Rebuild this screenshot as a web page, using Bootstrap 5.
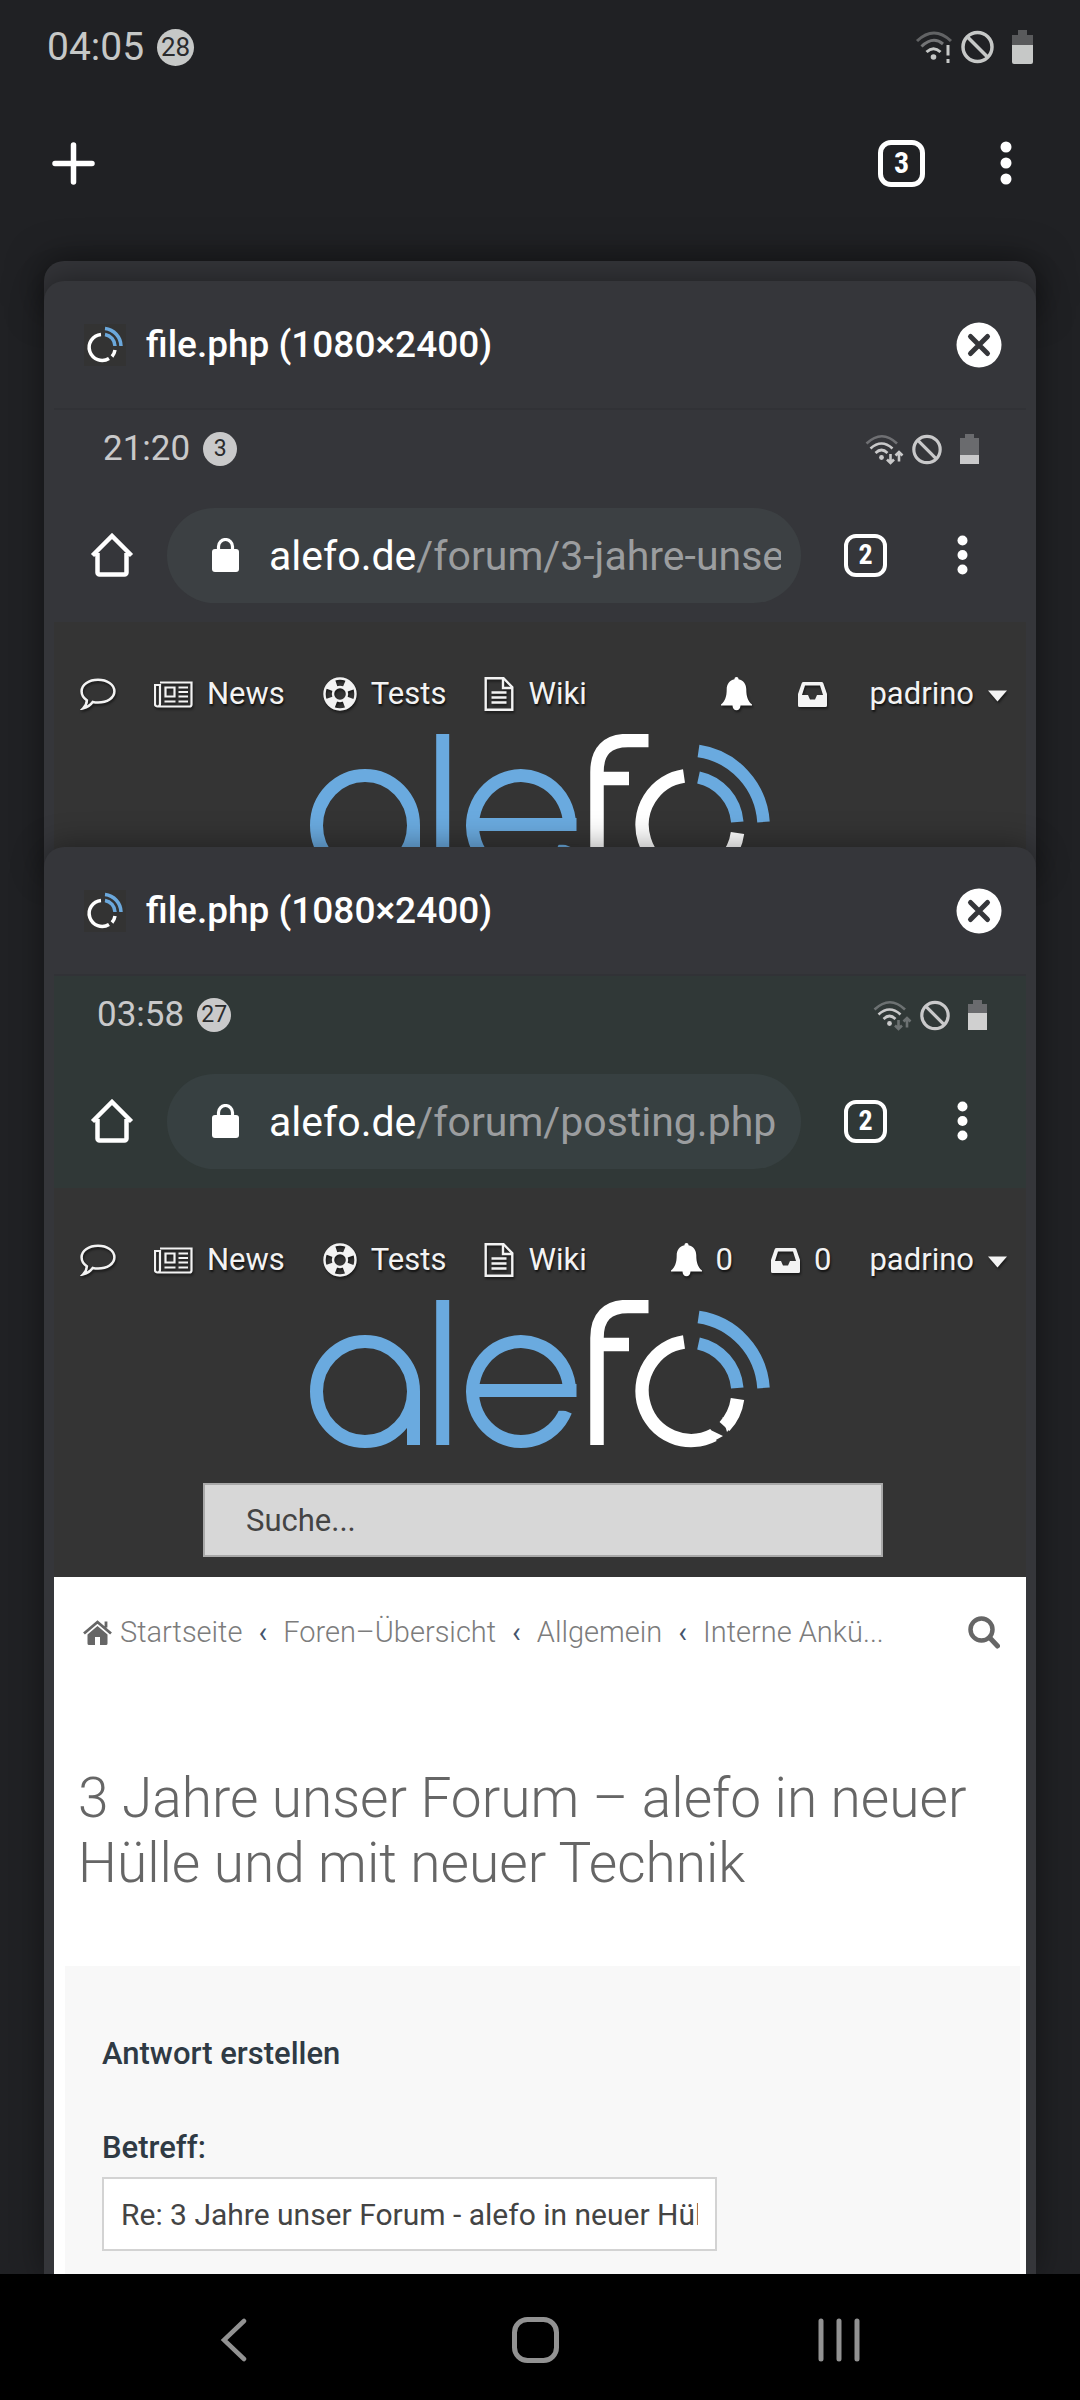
<!DOCTYPE html>
<html lang="de">
<head>
<meta charset="utf-8">
<meta name="viewport" content="width=device-width, initial-scale=1">
<title>Tabs</title>
<link href="https://cdn.jsdelivr.net/npm/bootstrap@5.3.0/dist/css/bootstrap.min.css" rel="stylesheet">
<style>
body{background:#202124;color:#fff;font-family:Roboto,"Liberation Sans",sans-serif;font-size:31px;line-height:40px}
svg{display:block;flex:none}
button{color:inherit;background:none;border:0;padding:0;font:inherit;flex:none}
.sys-bar{height:94px;padding:0 47px;font-size:39px;color:#c6c8c7}
.count-dot{width:37px;height:37px;border-radius:50%;background:#c6c8c7;color:#2a2b2d;font-size:26px;margin-left:13px}
.battery{margin-left:18px}
.tools-bar{height:138px;padding:0 68px 0 52px}
.tab-count{width:47px;height:47px;border:5px solid #fff;border-radius:13px;font-weight:700;font-size:30px;line-height:36px;font-family:"Roboto Condensed",Roboto,sans-serif}
.menu-dots{margin-left:75px}
.deck{padding:29px 44px 0}
.tab-peek{height:46px;margin-bottom:-26px;border-radius:20px 20px 0 0;background:#333438;box-shadow:0 0 36px rgba(0,0,0,.5)}
.tab-card{position:relative;background:#35363a;border-radius:20px 20px 0 0;box-shadow:0 0 32px rgba(0,0,0,.42)}
.tab-under{height:592px;margin-bottom:-26px;overflow:hidden}
.tab-head{height:127px;padding:0 34px 0 40px}
.tab-title{font-size:37px;line-height:48px;font-weight:500;margin-left:20px}
.shot{margin:0 10px;border-top:2px solid #313236}
.shot-sys{height:78px;padding:0 47px 0 49px;font-size:35px;color:#c9c9ca}
.shot-sys .count-dot{width:34px;height:34px;font-size:23px;background:#c9c9ca}
.shot-url{height:134px;padding:0 58px 0 36px}
.shot-url .tab-count{width:43px;height:43px;border-width:4px;font-size:28px;line-height:34px;border-radius:12px}
.shot-url .menu-dots{margin-left:70px}
.omni{height:95px;border-radius:48px;background:#3c4043;padding:0 20px 0 45px;margin:0 43px 0 33px;font-size:41px;color:#9b9d9f;flex:1 1 0;min-width:0}
.omni-text{overflow:hidden;white-space:nowrap;margin-left:30px;padding-top:2px;text-align:left;line-height:56px}
.green{background:#303837}
.green .shot-sys{padding:0 39px 0 43px}
.green .omni{background:#374041}
.forum-head{background:#343434;padding:30px 0 20px}
.forum-nav{height:84px;margin-bottom:-2px;padding:0 19px 0 26px;text-shadow:1px 2px 2px #111}
.forum-nav a{display:flex;align-items:center;gap:14px;color:#f3f3f3;text-decoration:none}
.forum-nav svg{filter:drop-shadow(1px 2px 1px #1a1a1a)}
.nav-group{display:flex;gap:38px}
.find-box{display:block;width:70%;height:74px;margin:34px auto 0 149px;border:2px solid #a9a9a9;background:#d7d7d7;color:#444;padding:0 41px}
.find-box::placeholder{color:#444;opacity:1}
.crumbs{height:110px;padding:0 26px 0 29px;font-weight:300;font-size:29px}
.crumbs a{color:#7c7c7c;text-decoration:none}
.crumbs b{font-weight:400;color:#44546c}
.topic{font-size:55px;line-height:65px;font-weight:300;color:#666;margin:0;padding:79px 24px 70px}
.reply{background:#f8f8f8;margin:0 6px 0 11px;padding:68px 37px 22px;color:#2f3a44}
.reply h2,.reply label{font-size:31px;line-height:40px;font-weight:500;margin:0}
.reply label{display:block;margin:54px 0 9px}
.reply input{display:block;width:615px;max-width:100%;height:74px;border:2px solid #d3d3d3;background:#fff;color:#444;padding:0 17px;font-size:30px}
.keys{height:126px;background:#000;padding:6px 220px 0;position:relative}
</style>
<script src="https://cdn.jsdelivr.net/npm/bootstrap@5.3.0/dist/js/bootstrap.bundle.min.js"></script>
</head>
<body class="d-flex flex-column min-vh-100">
<svg class="d-none" aria-hidden="true">
 <symbol id="fav" viewBox="0 0 42 42"><path fill="#333" d="M0 0h42v42H0z"/><g fill="none" stroke="#fff" stroke-width="3.500"><path d="M17 10.500A13 13 0 1 0 25 34.500"/><path d="M28 32.500A13 13 0 0 0 31 26"/></g><g fill="none" stroke="#6ba8dc" stroke-width="3.500"><path d="M21 10.500A12 12 0 0 1 31 22"/><path d="M21 4.500A18 18 0 0 1 37 22"/></g></symbol>
 <symbol id="close" viewBox="0 0 46 46"><circle cx="23" cy="23" r="22.500" fill="#fff"/><path d="M14.500 14.500l17 17M31.500 14.500l-17 17" stroke="#35363a" stroke-width="5" stroke-linecap="round"/></symbol>
 <symbol id="dots" viewBox="0 0 12 44"><g fill="#fff"><circle cx="6" cy="6" r="5.500"/><circle cx="6" cy="22" r="5.500"/><circle cx="6" cy="38" r="5.500"/></g></symbol>
 <symbol id="ban" viewBox="0 0 33 34"><g fill="none" stroke="currentColor" stroke-width="3.500"><circle cx="16.500" cy="17" r="14.500"/><path d="M6.500 7l20 20"/></g></symbol>
 <symbol id="home" viewBox="0 0 44 44"><path d="M2.500 22.500L22 3l19.500 19.500M7.500 20v19.500a2 2 0 0 0 2 2h25a2 2 0 0 0 2-2V20" fill="none" stroke="#fff" stroke-width="4.500"/></symbol>
 <symbol id="lock" viewBox="0 0 27 34"><rect y="11" width="27" height="23" rx="3" fill="#fff"/><path d="M6.500 13V8.500a7 7 0 0 1 14 0V13" fill="none" stroke="#fff" stroke-width="3.200"/></symbol>
 <symbol id="chat" viewBox="0 0 34 30"><path d="M17 1.500c8.500 0 15.500 4.500 15.500 11S25.500 23 17 23c-2 0-3.500-.2-5-.5-2.500 3.500-5.500 5-9 6 2-2 3.500-4.500 3.500-7.500-3-2-5-5-5-8.500C1.500 6 8.500 1.500 17 1.500z" fill="none" stroke="#f3f3f3" stroke-width="2.400"/></symbol>
 <symbol id="paper" viewBox="0 0 39 27"><g fill="none" stroke="#f3f3f3" stroke-width="2.200"><path d="M6 1.500h31.500v22a2 2 0 0 1-2 2h-32A2.500 2.500 0 0 1 1 23V4h5v19a2.500 2.500 0 0 1-2.500 2.500"/><path d="M11.500 6.500h9v9h-9zM24.500 6.500H34M24.500 11H34M24.500 15.500H34M10.500 20.500h11M24.500 20.500H34"/></g></symbol>
 <symbol id="ring" viewBox="0 0 34 34"><circle cx="17" cy="17" r="15.500" fill="none" stroke="#f3f3f3" stroke-width="2.400"/><circle cx="17" cy="17" r="7" fill="none" stroke="#f3f3f3" stroke-width="2.400"/><circle cx="17" cy="17" r="11.500" fill="none" stroke="#f3f3f3" stroke-width="8.500" stroke-dasharray="9.800 8.264" stroke-dashoffset="-4.100"/></symbol>
 <symbol id="doc" viewBox="0 0 29 34"><g fill="none" stroke="#f3f3f3" stroke-width="2.400"><path d="M1.200 1.200H19l8.800 9V32.800H1.200z"/><path d="M18.500 1.200V11h9.300M7 15.500h15M7 20.500h15M7 25.500h15"/></g></symbol>
 <symbol id="bell" viewBox="0 0 31 34"><path d="M15.500 0c1.300 0 2 .9 2 2.200 5 1 7.800 5 7.800 10 0 7 1.500 12 5.700 15.300V28.500H19.500a4 4.800 0 0 1-8 0H0v-1C4.200 24.200 5.700 19.200 5.700 12.200c0-5 2.800-9 7.800-10 0-1.300.7-2.200 2-2.200z" fill="#fff"/></symbol>
 <symbol id="inbox" viewBox="0 0 29 25"><path fill-rule="evenodd" d="M5.500 0h18a2 2 0 0 1 1.800 1.200L29 12v11.500a1.500 1.500 0 0 1-1.500 1.500h-26A1.500 1.500 0 0 1 0 23.500V12L3.700 1.200A2 2 0 0 1 5.500 0zM7 3.500L4 13h6l2 4.500h5l2-4.500h6L22 3.500z" fill="#f3f3f3"/></symbol>
 <symbol id="caret" viewBox="0 0 19 12"><path d="M0 .5h19L9.500 11.500z" fill="#f3f3f3"/></symbol>
 <symbol id="brand" viewBox="0 0 460 149">
  <g fill="none" stroke="#6aaadf" stroke-width="13"><ellipse cx="55" cy="91.500" rx="48.500" ry="50"/><path d="M103.500 91v54M132.700 0v145"/><path d="M259.500 90.500A48.500 50 0 1 0 255.700 111M162 90.500h104.500"/></g>
  <path d="M239 97.200h30v13.600h-30z" fill="#343434"/>
  <g fill="none" stroke="#fff" stroke-width="13.500"><path d="M287 145V38Q287 6.500 318 6.500h20.500M287 44.500h32"/><path d="M374 42A49 49.500 0 1 0 403.500 135M414.500 126.500A49 50 0 0 0 427.500 99"/></g>
  <path d="M399.500 129.500l13.500 6.500-9 5zM412.500 117l4.500 15 7-8z" fill="#fff"/>
  <g fill="none" stroke="#6aaadf" stroke-width="12.500"><path d="M388.500 43.500A49 50 0 0 1 427.300 88"/><path d="M388.500 17A76 77 0 0 1 453.500 88"/></g>
 </symbol>
</svg>

<header>
 <div class="sys-bar d-flex align-items-center"><span>04:05</span><span class="count-dot d-flex align-items-center justify-content-center">28</span>
  <div class="d-flex align-items-center ms-auto">
   <svg width="38" height="34" viewBox="0 0 38 34"><g fill="none" stroke="#c6c8c7" stroke-width="3"><path d="M2 11Q19-5 36 11" opacity=".4"/><path d="M6.500 16.500Q18 5.500 28 14" opacity=".5"/><path d="M11.500 22q7-6.500 14 0M33 15v10.500M33 29v4"/></g><circle cx="18.500" cy="27" r="2.800" fill="#c6c8c7"/></svg>
   <svg class="ms-2" width="33" height="34"><use href="#ban"/></svg>
   <svg class="battery" width="21" height="34" viewBox="0 0 21 34"><path d="M6 0h9v5h6v10H0V5h6z" fill="#595a5c"/><path d="M0 15h21v17a2 2 0 0 1-2 2H2a2 2 0 0 1-2-2z" fill="#c6c8c7"/></svg>
  </div>
 </div>
 <div class="tools-bar d-flex align-items-center justify-content-between">
  <button aria-label="Neuer Tab"><svg width="43" height="43" viewBox="0 0 43 43"><path d="M21.500 3v37M3 21.500h37" stroke="#fff" stroke-width="5.500" stroke-linecap="round"/></svg></button>
  <div class="d-flex align-items-center"><button class="tab-count">3</button><button class="menu-dots" aria-label="Menü"><svg width="12" height="44"><use href="#dots"/></svg></button></div>
 </div>
</header>

<main class="deck d-flex flex-column flex-grow-1">
 <div class="tab-peek"></div>
 <section class="tab-card tab-under">
  <div class="tab-head d-flex align-items-center"><svg width="42" height="42"><use href="#fav"/></svg><span class="tab-title">file.php (1080×2400)</span><button class="ms-auto" aria-label="Tab schließen"><svg width="46" height="46"><use href="#close"/></svg></button></div>
  <div class="shot">
   <div class="shot-sys d-flex align-items-center"><span>21:20</span><span class="count-dot d-flex align-items-center justify-content-center">3</span>
    <div class="d-flex align-items-center ms-auto">
     <svg width="39" height="31" viewBox="0 0 39 31"><g fill="none" stroke="#c9c9ca" stroke-width="2.600"><path d="M1.500 9.500Q17-5 32 9.500" opacity=".4"/><path d="M5.500 14.500q11-10 22 0M10.500 19q6-6 12 0M25.500 20v8M22 25.500l3.500 3.500 3.500-3.500M34 27.500v-9M30.500 21.500l3.500-3.500 3.500 3.500"/></g><circle cx="16.500" cy="23.500" r="2.400" fill="#c9c9ca"/></svg>
     <svg class="ms-2" width="30" height="31"><use href="#ban"/></svg>
     <svg class="battery" width="19" height="30" viewBox="0 0 19 30"><path d="M5 0h9v4h5v17H0V4h5z" fill="#6a6b6e"/><path d="M0 21h19v9H0z" fill="#c9c9ca"/></svg>
    </div>
   </div>
   <div class="shot-url d-flex align-items-center"><svg width="44" height="44"><use href="#home"/></svg>
    <button class="omni d-flex align-items-center"><svg width="27" height="34"><use href="#lock"/></svg><span class="omni-text"><span class="text-white">alefo.de</span>/forum/3-jahre-unse</span></button>
    <button class="tab-count">2</button><button class="menu-dots" aria-label="Menü"><svg width="11" height="40" viewBox="0 0 12 44"><use href="#dots"/></svg></button>
   </div>
   <div class="forum-head">
    <nav class="forum-nav d-flex align-items-center justify-content-between">
     <div class="nav-group">
      <a href="#" aria-label="Forum"><svg width="36" height="32"><use href="#chat"/></svg></a>
      <a href="#"><svg width="39" height="27"><use href="#paper"/></svg>News</a>
      <a href="#"><svg width="34" height="34"><use href="#ring"/></svg>Tests</a>
      <a href="#"><svg width="30" height="34"><use href="#doc"/></svg>Wiki</a>
     </div>
     <div class="nav-group">
      <a href="#" class="me-2" aria-label="Benachrichtigungen"><svg width="31" height="34"><use href="#bell"/></svg></a>
      <a href="#" class="me-1" aria-label="Nachrichten"><svg width="29" height="25"><use href="#inbox"/></svg></a>
      <a href="#">padrino<svg class="mt-1" width="19" height="12"><use href="#caret"/></svg></a>
     </div>
    </nav>
    <svg class="mx-auto" width="460" height="149" role="img" aria-label="alefo"><use href="#brand"/></svg>
   </div>
  </div>
 </section>

 <section class="tab-card flex-grow-1 d-flex flex-column">
  <div class="tab-head d-flex align-items-center"><svg width="42" height="42"><use href="#fav"/></svg><span class="tab-title">file.php (1080×2400)</span><button class="ms-auto" aria-label="Tab schließen"><svg width="46" height="46"><use href="#close"/></svg></button></div>
  <div class="shot flex-grow-1 d-flex flex-column bg-white">
   <div class="green">
    <div class="shot-sys d-flex align-items-center"><span>03:58</span><span class="count-dot d-flex align-items-center justify-content-center">27</span>
     <div class="d-flex align-items-center ms-auto">
      <svg width="39" height="31" viewBox="0 0 39 31"><g fill="none" stroke="#c9c9ca" stroke-width="2.600"><path d="M1.500 9.500Q17-5 32 9.500" opacity=".4"/><path d="M5.500 14.500q11-10 22 0M10.500 19q6-6 12 0"/><path d="M25.500 20v8M22 25.500l3.500 3.500 3.500-3.500M34 27.500v-9M30.500 21.500l3.500-3.500 3.500 3.500" opacity=".4"/></g><circle cx="16.500" cy="23.500" r="2.400" fill="#c9c9ca"/></svg>
      <svg class="ms-2" width="30" height="31"><use href="#ban"/></svg>
      <svg class="battery" width="19" height="30" viewBox="0 0 19 30"><path d="M5 0h9v4h5v9H0V4h5z" fill="#6a6b6e"/><path d="M0 13h19v17H0z" fill="#d0d0d0"/></svg>
     </div>
    </div>
    <div class="shot-url d-flex align-items-center"><svg width="44" height="44"><use href="#home"/></svg>
     <button class="omni d-flex align-items-center"><svg width="27" height="34"><use href="#lock"/></svg><span class="omni-text"><span class="text-white">alefo.de</span>/forum/posting.php</span></button>
     <button class="tab-count">2</button><button class="menu-dots" aria-label="Menü"><svg width="11" height="40" viewBox="0 0 12 44"><use href="#dots"/></svg></button>
    </div>
   </div>
   <div class="forum-head">
    <nav class="forum-nav d-flex align-items-center justify-content-between">
     <div class="nav-group">
      <a href="#" aria-label="Forum"><svg width="36" height="32"><use href="#chat"/></svg></a>
      <a href="#"><svg width="39" height="27"><use href="#paper"/></svg>News</a>
      <a href="#"><svg width="34" height="34"><use href="#ring"/></svg>Tests</a>
      <a href="#"><svg width="30" height="34"><use href="#doc"/></svg>Wiki</a>
     </div>
     <div class="nav-group">
      <a href="#"><svg width="31" height="34"><use href="#bell"/></svg>0</a>
      <a href="#"><svg width="29" height="25"><use href="#inbox"/></svg>0</a>
      <a href="#">padrino<svg class="mt-1" width="19" height="12"><use href="#caret"/></svg></a>
     </div>
    </nav>
    <svg class="mx-auto" width="460" height="149" role="img" aria-label="alefo"><use href="#brand"/></svg>
    <input class="find-box" type="search" placeholder="Suche..." aria-label="Suche">
   </div>
   <nav class="crumbs d-flex align-items-center">
    <a href="#" class="d-flex align-items-center"><svg width="29" height="25" viewBox="0 0 29 25"><path d="M14.500 6L4.500 14.500V23.500a1.500 1.500 0 0 0 1.500 1.500h6v-8h5v8h6a1.500 1.500 0 0 0 1.500-1.500v-9z" fill="#666"/><path d="M1 13.500L14.500 2 28 13.500M23 1.500v6" fill="none" stroke="#666" stroke-width="2.800"/></svg><span class="ms-2">Startseite</span></a>
    <b class="mx-3">‹</b><a href="#">Foren–Übersicht</a><b class="mx-3">‹</b><a href="#">Allgemein</a><b class="mx-3">‹</b><a href="#">Interne Ankü...</a>
    <button class="ms-auto" aria-label="Suchen"><svg width="32" height="33" viewBox="0 0 32 33"><g fill="none" stroke="#666" stroke-width="4.500"><circle cx="13.500" cy="13.500" r="11"/><path d="M21.500 21.500l8 8.500" stroke-linecap="round" stroke-width="5"/></g></svg></button>
   </nav>
   <h1 class="topic">3 Jahre unser Forum – alefo in neuer Hülle und mit neuer Technik</h1>
   <form class="reply flex-grow-1">
    <h2>Antwort erstellen</h2>
    <label for="subject">Betreff:</label>
    <input id="subject" type="text" value="Re: 3 Jahre unser Forum - alefo in neuer Hülle und mit neuer Technik">
   </form>
  </div>
 </section>
</main>

<footer class="keys d-flex align-items-center justify-content-between">
 <button aria-label="Zurück"><svg width="33" height="44" viewBox="0 0 33 44"><path d="M24 3L4 22l20 19" fill="none" stroke="#929292" stroke-width="4.500" stroke-linecap="round"/></svg></button>
 <button aria-label="Startbildschirm"><svg width="47" height="46" viewBox="0 0 47 46"><rect x="2.500" y="2.500" width="42" height="41" rx="13" fill="none" stroke="#929292" stroke-width="5"/></svg></button>
 <button aria-label="Übersicht"><svg width="42" height="44" viewBox="0 0 42 44"><path d="M3 3v38M21 3v38M39 3v38" stroke="#929292" stroke-width="5" stroke-linecap="round"/></svg></button>
</footer>
</body>
</html>
